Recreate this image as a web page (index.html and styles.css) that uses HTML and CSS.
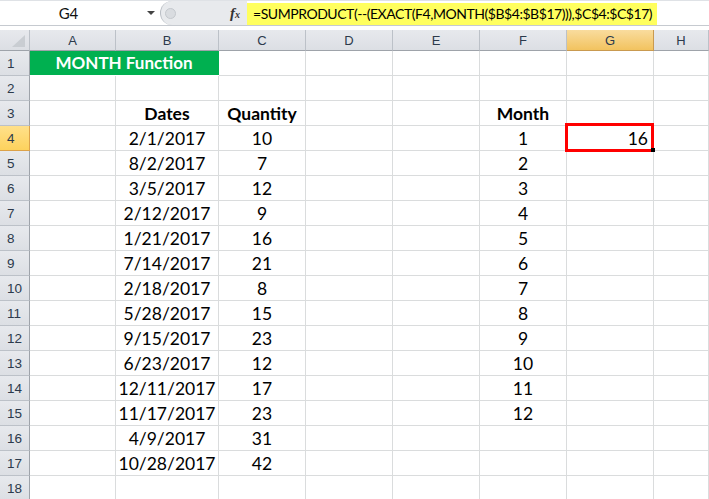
FILE: index.html
```html
<!DOCTYPE html>
<html lang="en">
<head>
<meta charset="UTF-8">
<title>MONTH Function</title>
<link rel="stylesheet" href="styles.css">
</head>
<body>
<div class="app">
  <div class="fbar">
    <div class="namebox"><span class="ref">G4</span><span class="arrow"></span></div>
    <div class="fxzone">
      <span class="knob"><span class="dot"></span></span>
      <span class="fx">f<sub>x</sub></span>
    </div>
    <div class="formula"><span class="ftext">=SUMPRODUCT(--(EXACT(F4,MONTH($B$4:$B$17))),$C$4:$C$17)</span></div>
  </div>
  <div class="sheet">
    <div class="row head">
      <div class="corner"><span class="tri"></span></div><div>A</div><div>B</div><div>C</div><div>D</div><div>E</div><div>F</div><div class="sel">G</div><div>H</div>
    </div>
    <div class="row">
      <div class="rh">1</div><div class="title">MONTH Function</div><div></div><div></div><div></div><div></div><div></div><div></div>
    </div>
    <div class="row">
      <div class="rh">2</div><div></div><div></div><div></div><div></div><div></div><div></div><div></div><div></div>
    </div>
    <div class="row">
      <div class="rh">3</div><div></div><div class="b">Dates</div><div class="b">Quantity</div><div></div><div></div><div class="b">Month</div><div></div><div></div>
    </div>
    <div class="row">
      <div class="rh sel">4</div><div></div><div>2/1/2017</div><div>10</div><div></div><div></div><div>1</div><div class="active">16</div><div></div>
    </div>
    <div class="row">
      <div class="rh">5</div><div></div><div>8/2/2017</div><div>7</div><div></div><div></div><div>2</div><div></div><div></div>
    </div>
    <div class="row">
      <div class="rh">6</div><div></div><div>3/5/2017</div><div>12</div><div></div><div></div><div>3</div><div></div><div></div>
    </div>
    <div class="row">
      <div class="rh">7</div><div></div><div>2/12/2017</div><div>9</div><div></div><div></div><div>4</div><div></div><div></div>
    </div>
    <div class="row">
      <div class="rh">8</div><div></div><div>1/21/2017</div><div>16</div><div></div><div></div><div>5</div><div></div><div></div>
    </div>
    <div class="row">
      <div class="rh">9</div><div></div><div>7/14/2017</div><div>21</div><div></div><div></div><div>6</div><div></div><div></div>
    </div>
    <div class="row">
      <div class="rh">10</div><div></div><div>2/18/2017</div><div>8</div><div></div><div></div><div>7</div><div></div><div></div>
    </div>
    <div class="row">
      <div class="rh">11</div><div></div><div>5/28/2017</div><div>15</div><div></div><div></div><div>8</div><div></div><div></div>
    </div>
    <div class="row">
      <div class="rh">12</div><div></div><div>9/15/2017</div><div>23</div><div></div><div></div><div>9</div><div></div><div></div>
    </div>
    <div class="row">
      <div class="rh">13</div><div></div><div>6/23/2017</div><div>12</div><div></div><div></div><div>10</div><div></div><div></div>
    </div>
    <div class="row">
      <div class="rh">14</div><div></div><div>12/11/2017</div><div>17</div><div></div><div></div><div>11</div><div></div><div></div>
    </div>
    <div class="row">
      <div class="rh">15</div><div></div><div>11/17/2017</div><div>23</div><div></div><div></div><div>12</div><div></div><div></div>
    </div>
    <div class="row">
      <div class="rh">16</div><div></div><div>4/9/2017</div><div>31</div><div></div><div></div><div></div><div></div><div></div>
    </div>
    <div class="row">
      <div class="rh">17</div><div></div><div>10/28/2017</div><div>42</div><div></div><div></div><div></div><div></div><div></div>
    </div>
    <div class="row">
      <div class="rh">18</div><div></div><div></div><div></div><div></div><div></div><div></div><div></div><div></div>
    </div>
  </div>
</div>
</body>
</html>
```

FILE: styles.css
```css
body{
    margin: 0;
    background: #ffffff;
}
.app{
    width: 709px;
    height: 499px;
    overflow: hidden;
    font-family: "Lato", "Open Sans", sans-serif;
    color: #000;
}

/* formula bar */
.fbar{
    display: flex;
    height: 26px;
    box-sizing: border-box;
    border-bottom: 1px solid #c6cad0;
    border-top: 1px solid #dfe2e6;
    background: #fff;
}
.namebox{
    width: 160px;
    display: flex;
    align-items: center;
    font-size: 15px;
    color: #111;
}
.namebox .ref{
    flex: 1;
    text-align: center;
    padding-left: 2px;
    padding-right: 12px;
}
.namebox .arrow{
    width: 0;
    height: 0;
    border-left: 4px solid transparent;
    border-right: 4px solid transparent;
    border-top: 4px solid #444;
    margin-right: 5px;
}
.fxzone{
    width: 86px;
    display: flex;
    align-items: center;
    background: #e8eaed;
    border-left: 1px solid #b9bec4;
    border-radius: 12px 0 0 12px;
}
.knob{
    width: 14px;
    height: 20px;
    display: flex;
    align-items: center;
    justify-content: center;
    margin-left: 2px;
}
.knob .dot{
    width: 9px;
    height: 9px;
    border-radius: 50%;
    background: #d9dce0;
    border: 1px solid #c4c8cd;
}
.fx{
    margin-left: auto;
    margin-right: 7px;
    font-family: "Liberation Serif", serif;
    font-style: italic;
    font-weight: bold;
    font-size: 15px;
    color: #333;
}
.fx sub{
    font-size: 10px;
    vertical-align: 0;
}
.formula{
    flex: 1;
    display: flex;
    align-items: center;
    padding-top: 1px;
}
.ftext{
    background: #ffff5e;
    height: 22px;
    line-height: 22px;
    padding: 0 5px 0 6px;
    font-size: 14px;
    letter-spacing: -0.45px;
    white-space: nowrap;
}

/* sheet */
.sheet{
    margin-top: 4px;
    background: #fff;
}
.row{
    display: grid;
    grid-template-columns: 30px 86px 103px 87px 87px 87px 87px 87px 55px;
    height: 25px;
}
.row > div{
    box-sizing: border-box;
    border-right: 1px solid #dadcdd;
    border-bottom: 1px solid #dadcdd;
    display: flex;
    align-items: flex-end;
    justify-content: center;
    padding-bottom: 1px;
    font-size: 17.5px;
    white-space: nowrap;
}
.row .b{
    font-weight: bold;
}
.row .title{
    grid-column: span 2;
    background: #00b050;
    color: #fff;
    font-weight: bold;
    font-size: 17px;
    border-right-color: #00b050;
    border-bottom-color: #00b050;
    height: 24px;
}

/* headers */
.row.head{
    height: 21px;
}
.row.head > div,
.row > .rh{
    background: linear-gradient(#e7e9ed, #dcdfe4);
    border-right: 1px solid #bcc1c8;
    border-bottom: 1px solid #bcc1c8;
    color: #2c3a4c;
    font-family: "Liberation Sans", sans-serif;
    font-size: 13px;
    align-items: center;
    padding-bottom: 0;
}
.row.head > div{
    border-bottom-color: #9ea3aa;
}
.row > .rh{
    justify-content: flex-start;
    padding-left: 7px;
    font-size: 13.5px;
    border-right-color: #9ea3aa;
}
.row.head > .sel{
    background: linear-gradient(#f9dc9e, #f2c35f);
    border-color: #c99a50;
}
.row > .rh.sel{
    background: linear-gradient(#ffe08a, #fdd25d);
    border-color: #dca24a;
}
.corner{
    position: relative;
}
.corner .tri{
    position: absolute;
    right: 4px;
    bottom: 3px;
    width: 0;
    height: 0;
    border-left: 13px solid transparent;
    border-bottom: 12px solid #c9cdd2;
}

/* active cell */
.row > .active{
    position: relative;
    justify-content: flex-end;
    padding-right: 5px;
}
.active::after{
    content: "";
    position: absolute;
    left: -2px;
    top: -3px;
    right: -1px;
    bottom: -2px;
    border: 3px solid #ff0000;
}
.active::before{
    content: "";
    position: absolute;
    right: -2px;
    bottom: -2px;
    width: 4px;
    height: 4px;
    background: #000;
    z-index: 1;
}
```
